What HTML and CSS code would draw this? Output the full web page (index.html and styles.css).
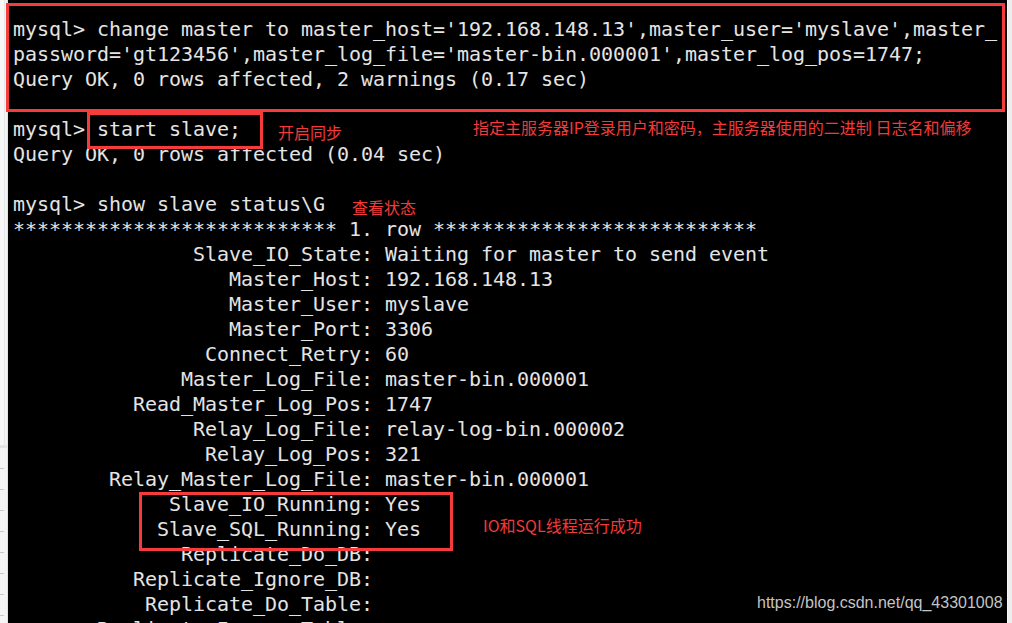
FILE: index.html
```html
<!DOCTYPE html>
<html lang="zh-CN">
<head>
<meta charset="utf-8">
<title>mysql slave status</title>
<link rel="stylesheet" href="styles.css">
</head>
<body>
<div class="screen">
  <div class="edge-left">
    <div class="edge-top"></div>
    <div class="edge-rows"></div>
  </div>
  <div class="terminal">
<pre class="console">mysql&gt; change master to master_host='192.168.148.13',master_user='myslave',master_
password='gt123456',master_log_file='master-bin.000001',master_log_pos=1747;
Query OK, 0 rows affected, 2 warnings (0.17 sec)

mysql&gt; start slave;
Query OK, 0 rows affected (0.04 sec)

mysql&gt; show slave status\G
*************************** 1. row ***************************
               Slave_IO_State: Waiting for master to send event
                  Master_Host: 192.168.148.13
                  Master_User: myslave
                  Master_Port: 3306
                Connect_Retry: 60
              Master_Log_File: master-bin.000001
          Read_Master_Log_Pos: 1747
               Relay_Log_File: relay-log-bin.000002
                Relay_Log_Pos: 321
        Relay_Master_Log_File: master-bin.000001
             Slave_IO_Running: Yes
            Slave_SQL_Running: Yes
              Replicate_Do_DB: 
          Replicate_Ignore_DB: 
           Replicate_Do_Table: 
       Replicate_Ignore_Table: 
</pre>
  </div>
  <div class="edge-right"></div>

  <div class="mark box-change"></div>
  <div class="mark box-start"></div>
  <div class="mark box-running"></div>

  <div class="note note-start">开启同步</div>
  <div class="note note-change">指定主服务器IP登录用户和密码，主服务器使用的二进制 日志名和偏移</div>
  <div class="note note-status">查看状态</div>
  <div class="note note-running">IO和SQL线程运行成功</div>
  <div class="watermark">https://blog.csdn.net/qq_43301008</div>
</div>
</body>
</html>
```

FILE: styles.css
```css
html, body {
  margin: 0;
  padding: 0;
  background: #000;
}

body {
  width: 1012px;
  height: 623px;
  overflow: hidden;
}

.screen {
  position: relative;
  display: flex;
  width: 1012px;
  height: 623px;
  overflow: hidden;
}

.edge-left {
  width: 8px;
  flex: none;
  display: flex;
  flex-direction: column;
  background: linear-gradient(to right, #f7f7f7 0 4px, #e6e6e6 4px 5px, #f4f4f4 5px 7px, #e2e2e2 7px 8px);
}

.edge-top {
  height: 445px;
}

.edge-rows {
  flex: 1;
  border-top: 3px solid #e4e4e4;
  background:
    linear-gradient(to right, transparent 0 4px, #f4f4f4 4px 7px, #e2e2e2 7px 8px),
    repeating-linear-gradient(to bottom, #f5f5f5 0 20px, #c9c9c9 20px 21px);
}

.terminal {
  flex: 1;
  background: #000;
  overflow: hidden;
}

.edge-right {
  width: 4px;
  flex: none;
  background: #ededed;
  border-left: 1px solid #f7f7f7;
}

.console {
  margin: 0;
  padding: 17px 0 0 5px;
  font-family: "DejaVu Sans Mono", "Liberation Mono", monospace;
  font-size: 20px;
  line-height: 25px;
  letter-spacing: -0.04px;
  color: #e4e4e4;
  white-space: pre;
}

.mark {
  position: absolute;
  box-sizing: border-box;
  border: 3px solid #f53b3b;
}

.box-change {
  left: 6px;
  top: 3px;
  width: 999px;
  height: 109px;
}

.box-start {
  left: 87px;
  top: 112px;
  width: 176px;
  height: 37px;
}

.box-running {
  left: 139px;
  top: 492px;
  width: 314px;
  height: 59px;
}

.note {
  position: absolute;
  font-family: "Noto Sans CJK SC", "Microsoft YaHei", sans-serif;
  font-size: 16px;
  line-height: 20px;
  color: #f23a3a;
  white-space: nowrap;
}

.note-start {
  left: 278px;
  top: 122px;
}

.note-change {
  left: 473px;
  top: 117px;
}

.note-status {
  left: 352px;
  top: 197px;
}

.note-running {
  left: 483px;
  top: 515px;
}

.watermark {
  position: absolute;
  left: 757px;
  top: 593px;
  font-family: "Liberation Sans", Arial, sans-serif;
  font-size: 16px;
  line-height: 20px;
  color: #c4c4c4;
  white-space: nowrap;
}
```
